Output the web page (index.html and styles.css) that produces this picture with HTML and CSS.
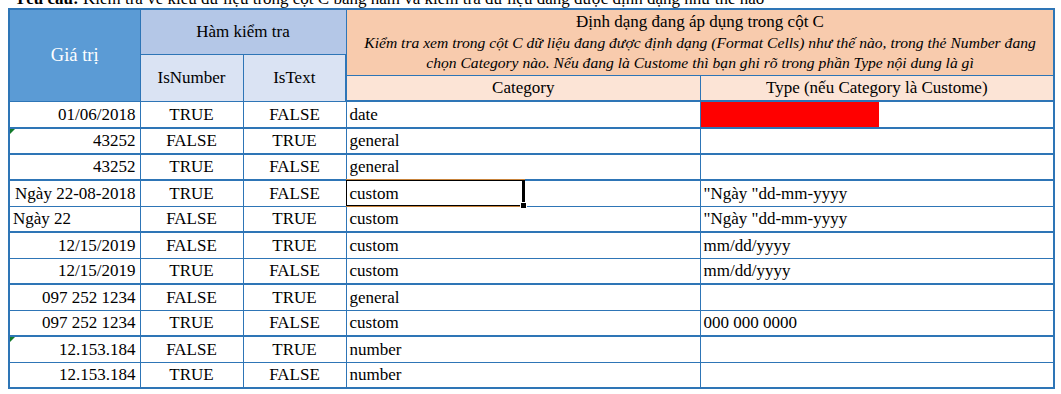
FILE: index.html
```html
<!DOCTYPE html>
<html lang="vi">
<head>
<meta charset="utf-8">
<title>Kiểm tra kiểu dữ liệu</title>
<link rel="stylesheet" href="styles.css">
</head>
<body>
<div class="note"><p><b>Yêu cầu:</b> Kiểm tra về kiểu dữ liệu trong cột C bằng hàm và kiểm tra dữ liệu đang được định dạng như thế nào</p></div>
<table class="sheet">
  <colgroup>
    <col class="c1"><col class="c2"><col class="c3"><col class="c4"><col class="c5">
  </colgroup>
  <thead>
    <tr class="h1">
      <th class="val" rowspan="3">Giá trị</th>
      <th class="fn" colspan="2">Hàm kiểm tra</th>
      <th class="fmt" colspan="2" rowspan="2">
        <div class="fmt-title">Định dạng đang áp dụng trong cột C</div>
        <div class="fmt-desc">Kiểm tra xem trong cột C dữ liệu đang được định dạng (Format Cells) như thế nào, trong thẻ Number đang<br>chọn Category nào. Nếu đang là Custome thì bạn ghi rõ trong phần Type nội dung là gì</div>
      </th>
    </tr>
    <tr class="h2">
      <th class="sub" rowspan="2">IsNumber</th>
      <th class="sub" rowspan="2">IsText</th>
    </tr>
    <tr class="h3">
      <th class="cat">Category</th>
      <th class="cat">Type (nếu Category là Custome)</th>
    </tr>
  </thead>
  <tbody>
    <tr class="thick"><td class="num">01/06/2018</td><td class="mid">TRUE</td><td class="mid">FALSE</td><td>date</td><td class="fill-cell"><div class="red-fill"></div></td></tr>
    <tr class="thick"><td class="num flag">43252</td><td class="mid">FALSE</td><td class="mid">TRUE</td><td>general</td><td></td></tr>
    <tr class="thick"><td class="num">43252</td><td class="mid">TRUE</td><td class="mid">FALSE</td><td>general</td><td></td></tr>
    <tr><td class="num">Ngày 22-08-2018</td><td class="mid">TRUE</td><td class="mid">FALSE</td><td class="selected">custom<span class="sel-box"><span class="handle"></span></span></td><td>"Ngày "dd-mm-yyyy</td></tr>
    <tr class="thick"><td>Ngày 22</td><td class="mid">FALSE</td><td class="mid">TRUE</td><td>custom</td><td>"Ngày "dd-mm-yyyy</td></tr>
    <tr><td class="num">12/15/2019</td><td class="mid">FALSE</td><td class="mid">TRUE</td><td>custom</td><td>mm/dd/yyyy</td></tr>
    <tr class="thick"><td class="num">12/15/2019</td><td class="mid">TRUE</td><td class="mid">FALSE</td><td>custom</td><td>mm/dd/yyyy</td></tr>
    <tr><td class="num">097 252 1234</td><td class="mid">FALSE</td><td class="mid">TRUE</td><td>general</td><td></td></tr>
    <tr class="thick"><td class="num">097 252 1234</td><td class="mid">TRUE</td><td class="mid">FALSE</td><td>custom</td><td>000 000 0000</td></tr>
    <tr><td class="num flag">12.153.184</td><td class="mid">FALSE</td><td class="mid">TRUE</td><td>number</td><td></td></tr>
    <tr><td class="num">12.153.184</td><td class="mid">TRUE</td><td class="mid">FALSE</td><td>number</td><td></td></tr>
  </tbody>
</table>
</body>
</html>
```

FILE: styles.css
```css
body {
  margin: 0;
  background: #ffffff;
  color: #000000;
  font-family: "Liberation Serif", "Times New Roman", serif;
  overflow: hidden;
}

.note {
  height: 8px;
  overflow: hidden;
  padding-left: 14px;
}

.note p {
  margin: -11px 0 0;
  font-size: 17px;
  line-height: 20px;
  white-space: nowrap;
}

.sheet {
  margin-left: 8px;
  width: 1045px;
  table-layout: fixed;
  border-collapse: collapse;
  border: 2px solid #2e75b6;
  font-size: 17px;
}

.c1 { width: 131px; }
.c2 { width: 103px; }
.c3 { width: 103px; }
.c4 { width: 354px; }
.c5 { width: 354px; }

.sheet th,
.sheet td {
  border: 1px solid #2e75b6;
  padding: 0 3px;
  white-space: nowrap;
  overflow: visible;
  font-weight: normal;
}

.sheet th {
  text-align: center;
  vertical-align: middle;
}

.h1 { height: 45px; }
.h2 { height: 21px; }
.h3 { height: 26px; }

.h3 th { border-bottom: 2px solid #2e75b6; }
.sub { border-bottom: 2px solid #2e75b6; }

.val {
  background: #5b9bd5;
  color: #ffffff;
  font-size: 18.5px;
  border-right: 2px solid #2e75b6;
  border-bottom: 2px solid #2e75b6;
  padding-top: 2px;
}

.fn {
  background: #b4c7e7;
  border-bottom-color: #b4c7e7;
  padding-top: 1px;
}

.sub {
  background: #dae3f3;
  padding-top: 2px;
}

.sub + .sub { border-right: 2px solid #2e75b6; }

.fmt {
  background: #f8cbad;
  vertical-align: top;
  border-bottom-color: #f8cbad;
  padding-top: 3px;
}

.fmt-title {
  font-size: 17px;
  line-height: 22px;
}

.fmt-desc {
  font-style: italic;
  font-size: 15.6px;
  line-height: 20px;
}

.cat {
  background: #fce4d6;
}

tbody tr { height: 26px; }

.sheet td {
  vertical-align: bottom;
  padding-bottom: 2px;
  text-align: left;
}

tbody tr.thick td { border-bottom-width: 2px; }

.sheet td.num {
  text-align: right;
  padding-right: 4px;
}

.sheet td.mid { text-align: center; }

.sheet td.fill-cell {
  padding: 0;
  vertical-align: top;
}

.red-fill {
  width: 178px;
  height: 25px;
  background: #ff0000;
}

.flag { position: relative; }

.flag::before {
  content: "";
  position: absolute;
  left: 0;
  top: 0;
  border-top: 5px solid #127a2a;
  border-right: 5px solid transparent;
}

.selected { position: relative; }

.sel-box {
  position: absolute;
  left: -1px;
  top: -1px;
  width: 175px;
  height: 24px;
  border: 1px solid #000000;
  border-right-width: 3px;
  box-shadow: 0 -1px 0 #c8843c, 0 1px 0 #c8843c;
}

.handle {
  position: absolute;
  right: -5px;
  bottom: -4px;
  width: 5px;
  height: 5px;
  background: #000000;
  border: 1px solid #ffffff;
}
```
